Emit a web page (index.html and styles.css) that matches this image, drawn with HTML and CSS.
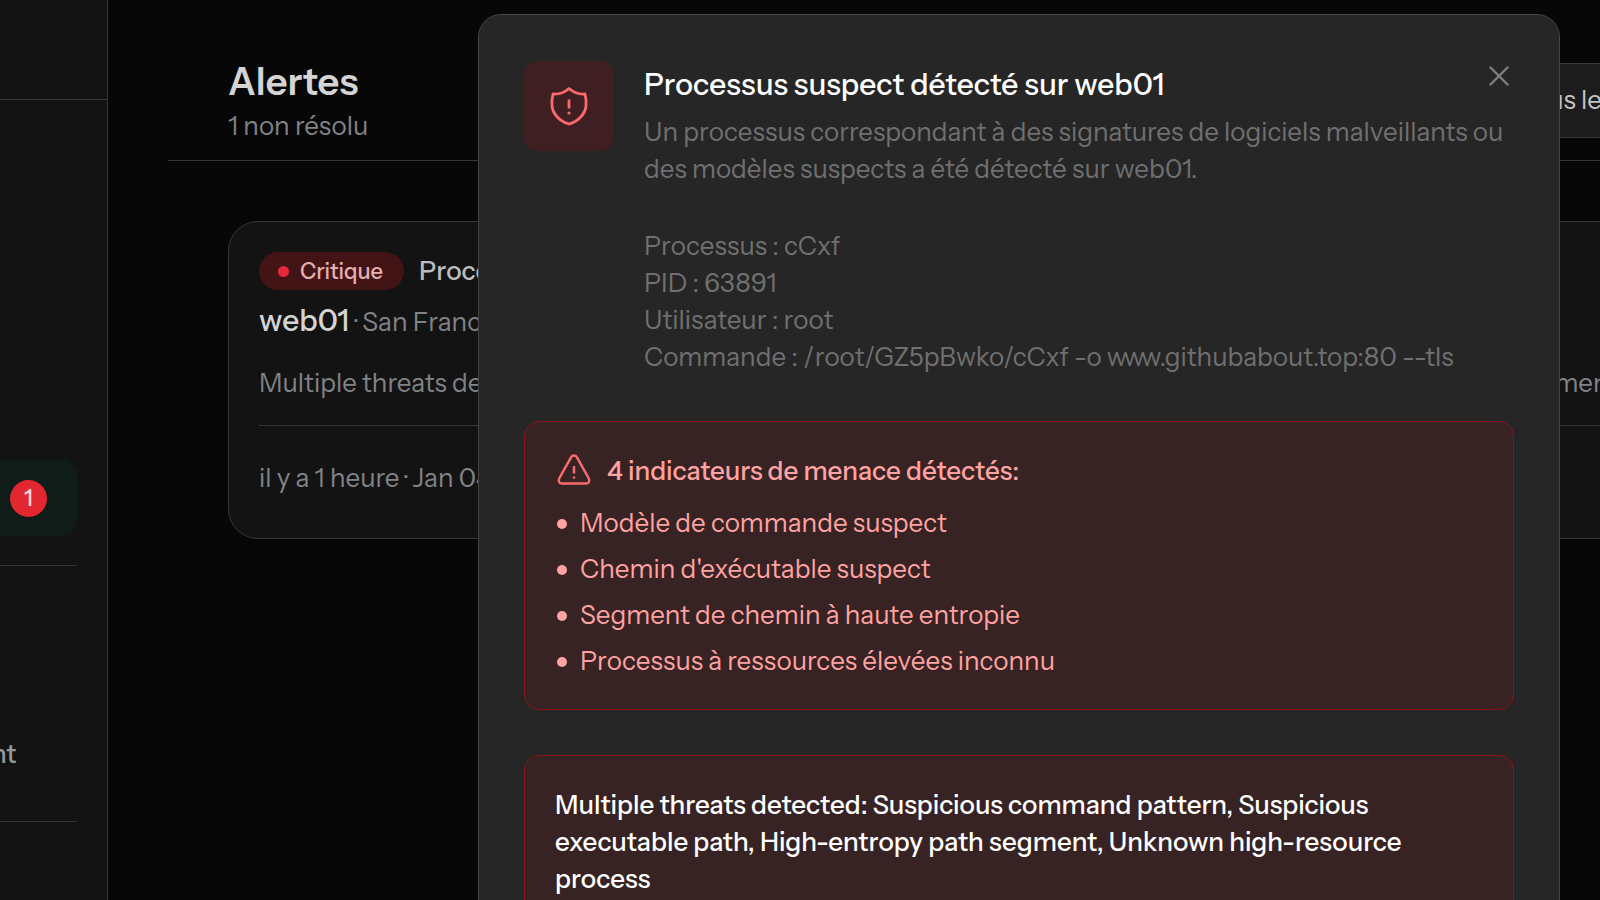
FILE: index.html
```
<!DOCTYPE html>
<html lang="fr">
<head>
  <meta charset="UTF-8">
  <title>Alertes</title>
  <meta name="viewport" content="width=device-width, initial-scale=1.0">
  <link rel="stylesheet" href="styles.css">
</head>
<body>
  <div class="app">
    <aside class="sidebar">
      <div class="sidebar-brand"></div>
      <nav class="sidebar-nav">
        <a class="nav-alerts" href="#alertes"><span class="nav-count">1</span></a>
        <div class="nav-group">
          <a class="nav-link" href="#">nt</a>
        </div>
      </nav>
    </aside>

    <main class="main">
      <header class="page-header">
        <div>
          <h1>Alertes</h1>
          <p class="subtitle">1 non résolu</p>
        </div>
        <select class="filter" aria-label="Filtrer les alertes">
          <option>Tous les statuts</option>
        </select>
      </header>

      <article class="alert-card">
        <div class="alert-top">
          <span class="severity"><span class="severity-dot"></span>Critique</span>
          <span class="alert-name">Processus</span>
        </div>
        <p class="alert-host"><strong>web01</strong> · San Francisco</p>
        <p class="alert-text">
          <span>Multiple threats detected:</span>
          <span>Suspicious command pattern,</span>
          <span>Suspicious executable path,</span>
          <span>High-entropy path segment</span>
        </p>
        <p class="alert-time">il y a 1 heure · Jan 04</p>
      </article>
    </main>
  </div>

  <div class="overlay">
    <section class="modal" role="dialog" aria-labelledby="modalTitle">
      <div class="modal-head">
        <div class="modal-icon">
          <svg viewBox="0 0 40 40" fill="none" stroke="currentColor" stroke-width="2.8" stroke-linecap="round" stroke-linejoin="round">
            <path d="M20 2.500C16 6 10 8.500 4 8C3 12 2.500 16 3 20C4 28.500 11 35.500 20 38C29 35.500 36 28.500 37 20C37.500 16 37 12 36 8C30 8.500 24 6 20 2.500Z"/>
            <path d="M20 13.500V22.500" stroke-linecap="butt"/>
            <circle cx="20" cy="27" r="1.600" fill="currentColor" stroke="none"/>
          </svg>
        </div>
        <div class="modal-intro">
          <h2 id="modalTitle">Processus suspect détecté sur web01</h2>
          <p>Un processus correspondant à des signatures de logiciels malveillants ou des modèles suspects a été détecté sur web01.</p>
          <p>Processus : cCxf<br>PID : 63891<br>Utilisateur : root<br>Commande : /root/GZ5pBwko/cCxf -o www.githubabout.top:80 --tls</p>
        </div>
        <button class="modal-close" type="button" aria-label="Fermer">
          <svg viewBox="0 0 20 20" fill="none" stroke="currentColor" stroke-width="2.4" stroke-linecap="round">
            <path d="M1.500 1.500L18.500 18.500M18.500 1.500L1.500 18.500"/>
          </svg>
        </button>
      </div>

      <div class="threat-box">
        <h3>
          <svg viewBox="0 0 37 37" fill="none" stroke="currentColor" stroke-width="2.500" stroke-linecap="round" stroke-linejoin="round">
            <path d="M16 4.300L4.200 25.500C2.900 28.200 4.400 30.600 7 30.600H31C33.600 30.600 35.100 28.200 33.800 25.500L22 4.300C20.600 2 17.400 2 16 4.300Z"/>
            <path d="M19 13V20.500" stroke-linecap="butt"/>
            <circle cx="19" cy="24.500" r="1.300" fill="currentColor" stroke="none"/>
          </svg>
          4 indicateurs de menace détectés:
        </h3>
        <ul>
          <li>Modèle de commande suspect</li>
          <li>Chemin d'exécutable suspect</li>
          <li>Segment de chemin à haute entropie</li>
          <li>Processus à ressources élevées inconnu</li>
        </ul>
      </div>

      <div class="threat-box summary">
        <p>Multiple threats detected: Suspicious command pattern, Suspicious executable path, High-entropy path segment, Unknown high-resource process</p>
      </div>
    </section>
  </div>
</body>
</html>
```
FILE: styles.css
```
* {
  box-sizing: border-box;
}
html, body {
  height: 100%;
  margin: 0;
  overflow: hidden;
}
body {
  background: #070707;
  color: #d4d4d4;
  font-family: "Instrument Sans", Inter, "Liberation Sans", sans-serif;
  font-size: 26px;
  line-height: 37px;
}
h1, h2, h3, p, ul {
  margin: 0;
  padding: 0;
}
.app {
  display: flex;
  min-height: 100vh;
  overflow: hidden;
}

/* Sidebar */
.sidebar {
  flex: 0 0 108px;
  background: #131313;
  border-right: 1px solid #363636;
}
.sidebar-brand {
  height: 100px;
  border-bottom: 1px solid #363636;
}
.sidebar-nav {
  padding-top: 360px;
  padding-right: 30px;
}
.nav-alerts {
  display: flex;
  align-items: center;
  justify-content: flex-end;
  height: 76px;
  padding-right: 30px;
  background: #0f1c17;
  border-radius: 0 15px 15px 0;
  text-decoration: none;
}
.nav-count {
  width: 37px;
  height: 37px;
  border-radius: 50%;
  background: #e32730;
  color: #fadcdc;
  font-size: 22px;
  font-weight: 500;
  text-align: center;
}
.nav-group {
  display: flex;
  align-items: flex-end;
  height: 257px;
  margin-top: 29px;
  padding-bottom: 48px;
  border-top: 1px solid #363636;
  border-bottom: 1px solid #363636;
}
.nav-link {
  margin-left: -9px;
  color: #94979a;
  font-weight: 500;
  text-decoration: none;
}

/* Page behind the dialog, runs off the right edge */
.main {
  flex: 0 0 1800px;
  min-width: 0;
  padding-left: 60px;
}
.page-header {
  display: flex;
  justify-content: space-between;
  align-items: flex-start;
  height: 161px;
  padding: 63px 100px 0 60px;
  border-bottom: 1px solid #363636;
}
h1 {
  font-size: 38px;
  font-weight: 600;
  line-height: 38px;
}
.subtitle {
  margin-top: 7px;
  color: #808387;
}
.filter {
  width: 320px;
  height: 75px;
  padding: 0 30px;
  background: #1c1c1c;
  border: 1px solid #3a3a3a;
  border-radius: 15px;
  color: #c4c4c4;
  font: inherit;
  appearance: none;
}
.alert-card {
  margin: 60px 60px 0;
  padding: 30px;
  background: #131313;
  border: 1px solid #363636;
  border-radius: 30px;
  white-space: nowrap;
}
.alert-top {
  display: flex;
  align-items: center;
  gap: 15px;
}
.severity {
  display: flex;
  align-items: center;
  gap: 11px;
  height: 38px;
  padding: 0 21px 0 19px;
  border-radius: 19px;
  background: #431416;
  color: #e6b0b0;
  font-size: 22px;
  font-weight: 500;
}
.severity-dot {
  width: 11px;
  height: 11px;
  border-radius: 50%;
  background: #e8273a;
}
.alert-name {
  color: #bcbcbc;
  font-weight: 500;
}
.alert-host {
  margin-top: 12px;
  color: #808387;
}
.alert-host strong {
  color: #d4d4d4;
  font-size: 30px;
  font-weight: 500;
}
.alert-text {
  display: flex;
  gap: 11px;
  margin-top: 24px;
  padding-bottom: 23px;
  border-bottom: 1px solid #363636;
  color: #808387;
}
.alert-time {
  margin-top: 34px;
  margin-bottom: 11px;
  color: #808387;
}

/* Dialog */
.overlay {
  position: fixed;
  inset: 0;
  padding: 14px 40px 0 478px;
}
.modal {
  min-height: 1200px;
  padding: 46px 45px;
  background: #262626;
  border: 1px solid #454545;
  border-radius: 23px;
}
.modal-head {
  position: relative;
  display: flex;
  gap: 30px;
}
.modal-icon {
  display: flex;
  align-items: center;
  justify-content: center;
  flex: 0 0 90px;
  height: 90px;
  border-radius: 14px;
  background: #3f1f22;
  color: #fb6a6c;
}
.modal-icon svg {
  width: 40px;
  height: 40px;
}
.modal-intro {
  flex: 1;
  color: #707070;
}
.modal-intro h2 {
  margin: 5px 0 11px;
  color: #fff;
  font-size: 30px;
  font-weight: 500;
}
.modal-intro p + p {
  margin-top: 40px;
}
.modal-close {
  position: absolute;
  top: 0;
  right: 0;
  padding: 5px;
  background: none;
  border: none;
  color: #808080;
  cursor: pointer;
}
.modal-close svg {
  display: block;
  width: 20px;
  height: 20px;
}
.threat-box {
  margin-top: 45px;
  padding: 31px 30px 29px;
  background: #372323;
  border: 1px solid #8a1519;
  border-radius: 15px;
  color: #ffa2a2;
}
.threat-box h3 {
  display: flex;
  align-items: center;
  gap: 15px;
  font-size: 26px;
  font-weight: 500;
}
.threat-box h3 svg {
  width: 37px;
  height: 37px;
  color: #fb6a6c;
}
.threat-box ul {
  display: grid;
  gap: 9px;
  margin-top: 15px;
  padding-left: 2px;
  list-style: none;
}
.threat-box li {
  display: flex;
  align-items: center;
  gap: 13px;
}
.threat-box li::before {
  content: "";
  width: 10px;
  height: 10px;
  border-radius: 50%;
  background: #ffa2a2;
}
.threat-box.summary p {
  color: #fff;
  font-weight: 500;
}
```
